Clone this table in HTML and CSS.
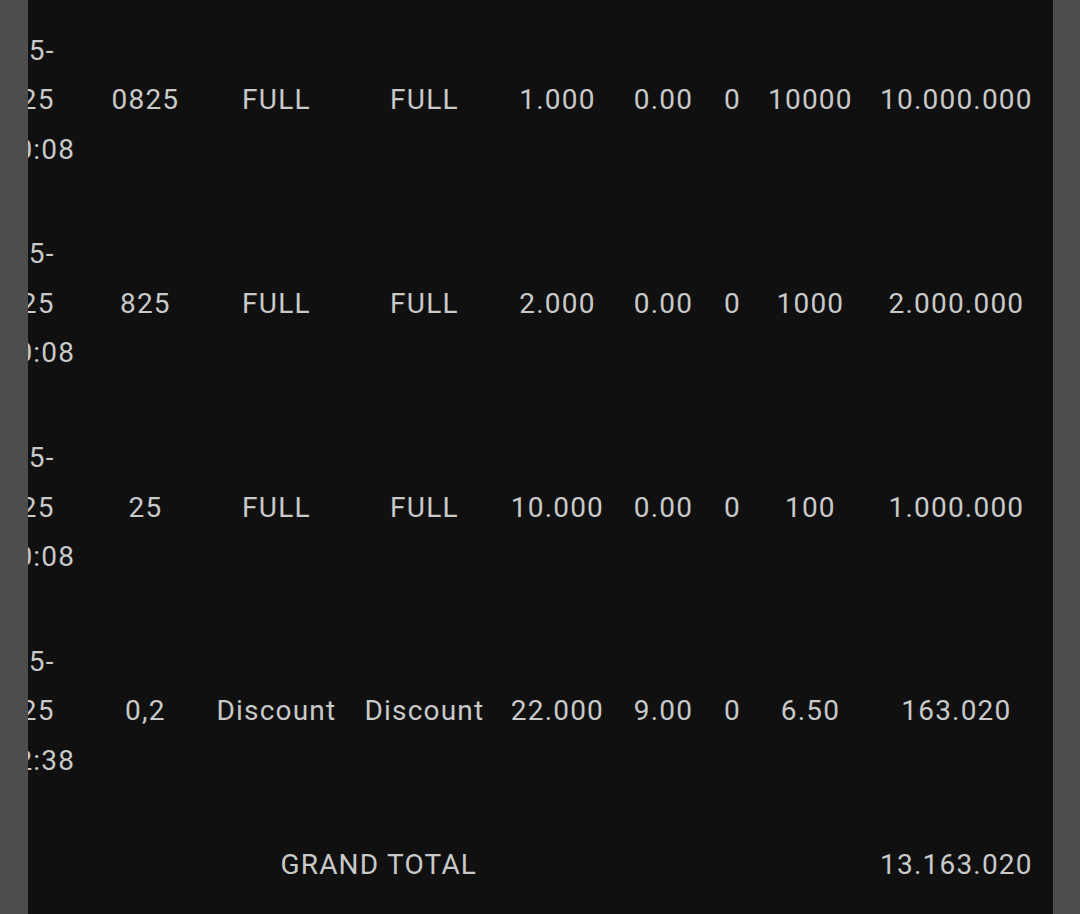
FILE: index.html
```html
<!DOCTYPE html>
<html>
<head>
<meta charset="utf-8">
<link rel="stylesheet" href="styles.css">
</head>
<body>
<div class="panel">
  <div class="table">
    <div class="row">
      <div class="cell date">2025-<br>05-25<br>10:10:08</div>
      <div class="cell">0825</div>
      <div class="cell">FULL</div>
      <div class="cell">FULL</div>
      <div class="cell">1.000</div>
      <div class="cell">0.00</div>
      <div class="cell">0</div>
      <div class="cell">10000</div>
      <div class="cell">10.000.000</div>
    </div>
    <div class="row">
      <div class="cell date">2025-<br>05-25<br>10:10:08</div>
      <div class="cell">825</div>
      <div class="cell">FULL</div>
      <div class="cell">FULL</div>
      <div class="cell">2.000</div>
      <div class="cell">0.00</div>
      <div class="cell">0</div>
      <div class="cell">1000</div>
      <div class="cell">2.000.000</div>
    </div>
    <div class="row">
      <div class="cell date">2025-<br>05-25<br>10:10:08</div>
      <div class="cell">25</div>
      <div class="cell">FULL</div>
      <div class="cell">FULL</div>
      <div class="cell">10.000</div>
      <div class="cell">0.00</div>
      <div class="cell">0</div>
      <div class="cell">100</div>
      <div class="cell">1.000.000</div>
    </div>
    <div class="row">
      <div class="cell date">2025-<br>05-25<br>10:12:38</div>
      <div class="cell">0,2</div>
      <div class="cell">Discount</div>
      <div class="cell">Discount</div>
      <div class="cell">22.000</div>
      <div class="cell">9.00</div>
      <div class="cell">0</div>
      <div class="cell">6.50</div>
      <div class="cell">163.020</div>
    </div>
    <div class="row total">
      <div class="cell label">GRAND TOTAL</div>
      <div class="cell amount">13.163.020</div>
    </div>
  </div>
</div>
</body>
</html>
```
FILE: styles.css
```css
html, body {
  margin: 0;
  padding: 0;
  background: #4d4d4d;
  height: 100%;
}
body {
  font-family: Roboto, "Liberation Sans", sans-serif;
  overflow: hidden;
}
.panel {
  margin: 0 27px 0 28px;
  height: 914px;
  background: #101010;
  overflow: hidden;
}
.table {
  margin-top: -1.9px;
  margin-left: -83.6px;
  width: 1102px;
}
.row {
  display: grid;
  grid-template-columns: 144px 114px 148px 148px 118px 94px 44px 112px 180px;
  align-items: center;
  padding: 27.6px 0;
  color: #c9c9c9;
  font-size: 28px;
  line-height: 49.5px;
  letter-spacing: 1.2px;
}
.cell {
  text-align: center;
  white-space: nowrap;
}
.total .label {
  grid-column: 3 / 6;
  text-align: left;
  padding-left: 78px;
}
.total .amount {
  grid-column: 9 / 10;
}
```
